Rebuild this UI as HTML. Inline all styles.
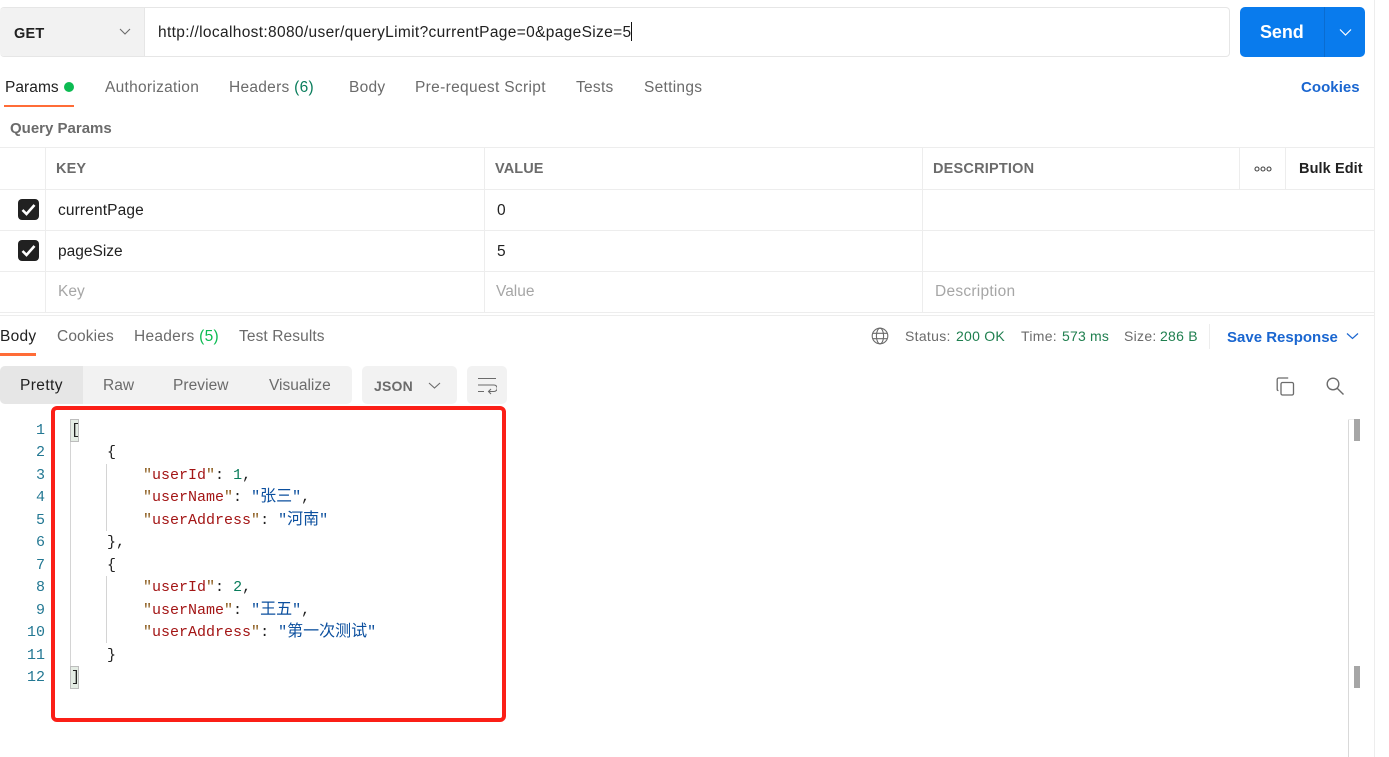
<!DOCTYPE html>
<html><head><meta charset="utf-8">
<style>
html,body{margin:0;padding:0;background:#fff}
#p{position:relative;width:1389px;height:757px;overflow:hidden;background:#fff;font-family:"Liberation Sans","Noto Sans CJK SC",sans-serif;font-size:15.5px;color:#6b6b6b}
#p div,#p span.t{position:absolute}
.t{white-space:nowrap;line-height:18px;letter-spacing:.28px}
.l{background:#ededed}
.c{font-family:"Liberation Mono","Noto Sans CJK SC",monospace;font-size:15px;line-height:18px;height:18px;white-space:pre;color:#212121}
.k{color:#a31515}.q{color:#8a5a1a}.n{color:#0a7d5c}.s{color:#0b4f9e}
.s i{font-style:normal;font-size:16px;font-family:"Noto Sans CJK SC",sans-serif;line-height:0}
.g{color:#1f7f4f}
.h{font-weight:bold;font-size:14.5px}
.num{font-family:"Liberation Mono",monospace;font-size:15px;line-height:18px;color:#237893;width:30px;text-align:right;left:15px}
svg{position:absolute}
</style></head><body><div id="p">

<div class="l" style="left:1374px;top:0;width:1px;height:757px"></div>

<!-- URL bar -->
<div style="left:0;top:7px;width:1229px;height:48px;border:1px solid #e6e6e6;border-left:0;border-radius:4px;background:#fff"></div>
<div style="left:0;top:8px;width:144px;height:48px;background:#f2f2f2;border-right:1px solid #e6e6e6;border-radius:4px 0 0 4px"></div>
<span class="t" style="left:14px;top:25px;font-size:14.5px;font-weight:bold;color:#212121;letter-spacing:.2px">GET</span>
<svg style="left:119px;top:28px" width="12" height="8"><path d="M1 1l5 5 5-5" fill="none" stroke="#6b6b6b" stroke-width="1.1"/></svg>
<span class="t" style="left:158px;top:24px;color:#212121;letter-spacing:.34px">http://localhost:8080/user/queryLimit?currentPage=0&amp;pageSize=5</span>
<div style="left:631px;top:22px;width:1px;height:19px;background:#111"></div>

<!-- Send -->
<div style="left:1240px;top:7px;width:125px;height:50px;background:#097bed;border-radius:5px"></div>
<div style="left:1324px;top:7px;width:1px;height:50px;background:#0a6cd0"></div>
<span class="t" style="left:1260px;top:23px;color:#fff;font-weight:bold;font-size:18px;letter-spacing:-.1px">Send</span>
<svg style="left:1339px;top:28px" width="13" height="9"><path d="M1 1.500l5.500 5.500 5.500-5.500" fill="none" stroke="#fff" stroke-width="1.2"/></svg>

<!-- Tabs -->
<span class="t" style="left:5px;top:79px;color:#212121;letter-spacing:.05px">Params</span>
<div style="left:64px;top:82px;width:10px;height:10px;border-radius:50%;background:#0cbb52"></div>
<div style="left:4px;top:105px;width:70px;height:2px;background:#ff6c37"></div>
<span class="t" style="left:105px;top:79px">Authorization</span>
<span class="t" style="left:229px;top:79px">Headers <span style="color:#0a7d5c">(6)</span></span>
<span class="t" style="left:349px;top:79px">Body</span>
<span class="t" style="left:415px;top:79px;letter-spacing:.33px">Pre-request Script</span>
<span class="t" style="left:576px;top:79px">Tests</span>
<span class="t" style="left:644px;top:79px">Settings</span>
<span class="t" style="left:1301px;top:79px;color:#1a66d0;font-weight:bold;font-size:15px;letter-spacing:.05px">Cookies</span>
<span class="t" style="left:10px;top:120px;font-weight:bold;font-size:15px;letter-spacing:0">Query Params</span>

<!-- Table -->
<div class="l" style="left:0;top:147px;width:1374px;height:1px"></div>
<div class="l" style="left:0;top:189px;width:1374px;height:1px"></div>
<div class="l" style="left:0;top:230px;width:1374px;height:1px"></div>
<div class="l" style="left:0;top:271px;width:1374px;height:1px"></div>
<div class="l" style="left:0;top:312px;width:1374px;height:1px"></div>
<div class="l" style="left:0;top:315px;width:1374px;height:1px"></div>
<div class="l" style="left:45px;top:148px;width:1px;height:164px"></div>
<div class="l" style="left:484px;top:148px;width:1px;height:164px"></div>
<div class="l" style="left:922px;top:148px;width:1px;height:164px"></div>
<div class="l" style="left:1239px;top:148px;width:1px;height:41px"></div>
<div class="l" style="left:1285px;top:148px;width:1px;height:41px"></div>

<span class="t h" style="left:56px;top:160px;letter-spacing:.1px">KEY</span>
<span class="t h" style="left:495px;top:160px;letter-spacing:.1px">VALUE</span>
<span class="t h" style="left:933px;top:160px;letter-spacing:.2px">DESCRIPTION</span>
<svg style="left:1254px;top:165px" width="19" height="8"><g fill="none" stroke="#444" stroke-width="1.1"><circle cx="3" cy="4" r="2"/><circle cx="9" cy="4" r="2"/><circle cx="15" cy="4" r="2"/></g></svg>
<span class="t h" style="left:1299px;top:160px;color:#212121;letter-spacing:.1px">Bulk Edit</span>

<div style="left:18px;top:199px;width:21px;height:21px;border-radius:4px;background:#212121"></div>
<svg style="left:18px;top:199px" width="21" height="21"><path d="M4.500 11l4 4 8-9" fill="none" stroke="#fff" stroke-width="2.6"/></svg>
<div style="left:18px;top:240px;width:21px;height:21px;border-radius:4px;background:#212121"></div>
<svg style="left:18px;top:240px" width="21" height="21"><path d="M4.500 11l4 4 8-9" fill="none" stroke="#fff" stroke-width="2.6"/></svg>

<span class="t" style="left:58px;top:202px;color:#212121;letter-spacing:.13px">currentPage</span>
<span class="t" style="left:497px;top:202px;color:#212121">0</span>
<span class="t" style="left:58px;top:243px;color:#212121;letter-spacing:0">pageSize</span>
<span class="t" style="left:497px;top:243px;color:#212121">5</span>
<span class="t" style="left:58px;top:283px;color:#a6a6a6;letter-spacing:0">Key</span>
<span class="t" style="left:496px;top:283px;color:#a6a6a6;letter-spacing:0">Value</span>
<span class="t" style="left:935px;top:283px;color:#a6a6a6;letter-spacing:.26px">Description</span>

<!-- Response tabs -->
<span class="t" style="left:0;top:328px;color:#212121">Body</span>
<div style="left:0;top:353px;width:36px;height:3px;background:#ff6c37"></div>
<span class="t" style="left:57px;top:328px;letter-spacing:.12px">Cookies</span>
<span class="t" style="left:134px;top:328px">Headers <span style="color:#0cbb52">(5)</span></span>
<span class="t" style="left:239px;top:328px;letter-spacing:.1px">Test Results</span>

<svg style="left:871px;top:327px" width="18" height="18"><g fill="none" stroke="#6b6b6b" stroke-width="1.1"><circle cx="9" cy="9" r="7.800"/><ellipse cx="9" cy="9" rx="3.600" ry="7.800"/><path d="M1.600 6.300h14.800M1.600 11.700h14.800"/></g></svg>
<span class="t" style="left:905px;top:327px;font-size:14px;letter-spacing:.3px">Status:</span>
<span class="t g" style="left:956px;top:327px;font-size:14px;letter-spacing:.25px">200 OK</span>
<span class="t" style="left:1021px;top:327px;font-size:14px;letter-spacing:.3px">Time:</span>
<span class="t g" style="left:1062px;top:327px;font-size:14px;letter-spacing:.2px">573 ms</span>
<span class="t" style="left:1124px;top:327px;font-size:14px;letter-spacing:.3px">Size:</span>
<span class="t g" style="left:1160px;top:327px;font-size:14px;letter-spacing:.25px">286 B</span>
<div class="l" style="left:1209px;top:324px;width:1px;height:25px"></div>
<span class="t" style="left:1227px;top:329px;color:#1a66d0;font-weight:bold;font-size:15px;letter-spacing:0">Save Response</span>
<svg style="left:1346px;top:332px" width="13" height="9"><path d="M1 1.500l5.500 5 5.500-5" fill="none" stroke="#1a66d0" stroke-width="1.2"/></svg>

<!-- Format bar -->
<div style="left:0;top:366px;width:352px;height:38px;background:#f2f2f2;border-radius:5px"></div>
<div style="left:0;top:366px;width:83px;height:38px;background:#e6e6e6;border-radius:5px 0 0 5px"></div>
<span class="t" style="left:20px;top:377px;color:#212121;letter-spacing:.4px">Pretty</span>
<span class="t" style="left:103px;top:377px;letter-spacing:0">Raw</span>
<span class="t" style="left:173px;top:377px;letter-spacing:.05px">Preview</span>
<span class="t" style="left:269px;top:377px;letter-spacing:0">Visualize</span>
<div style="left:362px;top:366px;width:95px;height:38px;background:#f2f2f2;border-radius:5px"></div>
<span class="t" style="left:374px;top:377px;font-weight:bold;font-size:14px;color:#6b6b6b;letter-spacing:.2px">JSON</span>
<svg style="left:428px;top:382px" width="13" height="8"><path d="M1 1l5.500 5 5.500-5" fill="none" stroke="#6b6b6b" stroke-width="1.1"/></svg>
<div style="left:467px;top:366px;width:40px;height:38px;background:#f2f2f2;border-radius:5px"></div>
<svg style="left:477px;top:377px" width="20" height="18"><g fill="none" stroke="#6b6b6b" stroke-width="1.1"><path d="M1 1.500h18M1 8h16a2.500 2.500 0 0 1 0 6.500h-5M1 14.500h6"/><path d="M14 12l-2.500 2.500 2.500 2.500"/></g></svg>

<svg style="left:1276px;top:377px" width="19" height="19"><g fill="none" stroke="#6b6b6b" stroke-width="1.3"><rect x="5" y="5.500" width="12.500" height="12.500" rx="1.500"/><path d="M2.500 13.500h-.3a1.200 1.200 0 0 1-1-1.200V2.500a1.500 1.500 0 0 1 1.500-1.500h9.500"/></g></svg>
<svg style="left:1326px;top:377px" width="19" height="19"><g fill="none" stroke="#6b6b6b" stroke-width="1.4"><circle cx="7" cy="7" r="5.800"/><path d="M11.200 11.200l6.300 6.300"/></g></svg>

<!-- Code -->
<div class="num" style="top:422px">1</div>
<div class="num" style="top:444px">2</div>
<div class="num" style="top:467px">3</div>
<div class="num" style="top:489px">4</div>
<div class="num" style="top:512px">5</div>
<div class="num" style="top:534px">6</div>
<div class="num" style="top:557px">7</div>
<div class="num" style="top:579px">8</div>
<div class="num" style="top:602px">9</div>
<div class="num" style="top:624px">10</div>
<div class="num" style="top:647px">11</div>
<div class="num" style="top:669px">12</div>

<div style="left:70px;top:441px;width:1px;height:226px;background:#d4d4d4"></div>
<div style="left:106px;top:464px;width:1px;height:67px;background:#d4d4d4"></div>
<div style="left:106px;top:576px;width:1px;height:67px;background:#d4d4d4"></div>
<div style="left:70px;top:419px;width:7px;height:21px;background:#e4ece4;border:1px solid #bdbdbd"></div>
<div style="left:70px;top:666px;width:7px;height:21px;background:#e4ece4;border:1px solid #bdbdbd"></div>

<div class="c" style="left:71px;top:422px">[</div>
<div class="c" style="left:107px;top:444px">{</div>
<div class="c" style="left:143px;top:467px"><span class="q">"</span><span class="k">userId</span><span class="q">"</span>: <span class="n">1</span>,</div>
<div class="c" style="left:143px;top:489px"><span class="q">"</span><span class="k">userName</span><span class="q">"</span>: <span class="s">"<i>张三</i>"</span>,</div>
<div class="c" style="left:143px;top:512px"><span class="q">"</span><span class="k">userAddress</span><span class="q">"</span>: <span class="s">"<i>河南</i>"</span></div>
<div class="c" style="left:107px;top:534px">},</div>
<div class="c" style="left:107px;top:557px">{</div>
<div class="c" style="left:143px;top:579px"><span class="q">"</span><span class="k">userId</span><span class="q">"</span>: <span class="n">2</span>,</div>
<div class="c" style="left:143px;top:602px"><span class="q">"</span><span class="k">userName</span><span class="q">"</span>: <span class="s">"<i>王五</i>"</span>,</div>
<div class="c" style="left:143px;top:624px"><span class="q">"</span><span class="k">userAddress</span><span class="q">"</span>: <span class="s">"<i>第一次测试</i>"</span></div>
<div class="c" style="left:107px;top:647px">}</div>
<div class="c" style="left:71px;top:669px">]</div>

<!-- Scrollbar -->
<div style="left:1348px;top:419px;width:1px;height:338px;background:#d9d9d9"></div>
<div style="left:1348px;top:419px;width:12px;height:1px;background:#eee"></div>
<div style="left:1354px;top:419px;width:6px;height:22px;background:#a6a6a6"></div>
<div style="left:1354px;top:666px;width:6px;height:22px;background:#a6a6a6"></div>

<!-- Red annotation box -->
<div style="left:51px;top:406px;width:447px;height:308px;border:4px solid #fb1f17;border-radius:6px"></div>

</div></body></html>
